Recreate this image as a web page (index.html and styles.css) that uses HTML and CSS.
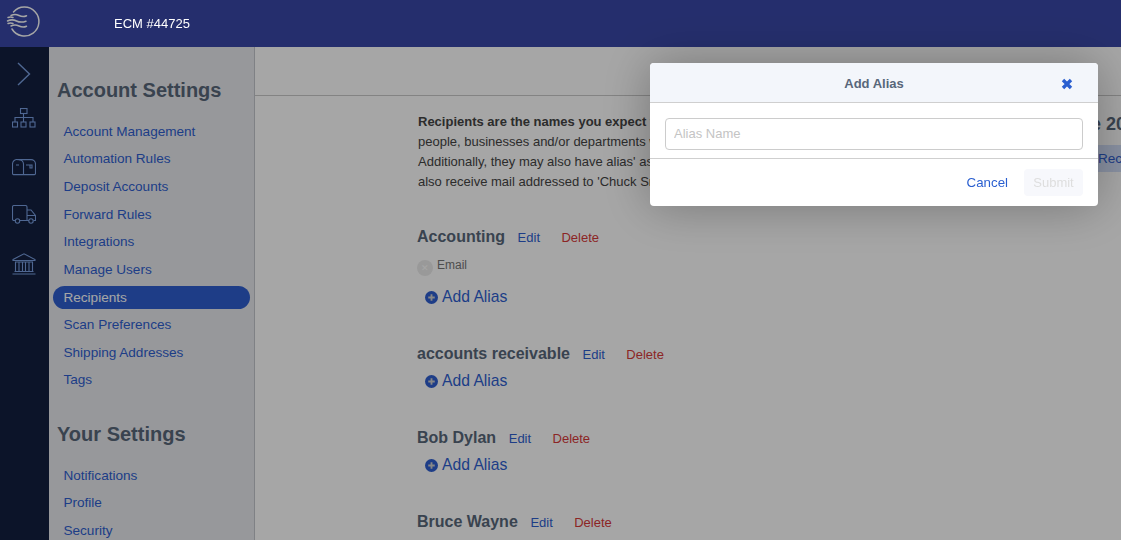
FILE: index.html
```html
<!DOCTYPE html>
<html lang="en">
<head>
<meta charset="utf-8">
<title>Recipients</title>
<link rel="stylesheet" href="styles.css">
</head>
<body>
<div class="app">
  <header class="topbar">
    <svg class="logo" width="49" height="47" viewBox="0 0 49 47" fill="none" stroke="#fff" stroke-width="1.500" stroke-linecap="round">
      <path d="M13.500 12A14.500 14.500 0 1 1 12 29"/>
      <path d="M11 15.500c3-1.500 5-1.500 8 0s5 1.500 7.500 .3"/>
      <path d="M8 17.500c2-.8 3-.8 5 0"/>
      <path d="M7.500 21c3-1.500 6-1.500 9 0s6 1.500 9.500 .2"/>
      <path d="M8 23.500c2-.8 3-.8 5 0"/>
      <path d="M11 26c3-1.500 5-1.500 8 0s5 1.500 7.500 .3"/>
    </svg>
    <span class="account">ECM #44725</span>
  </header>
  <div class="body">
    <nav class="rail">
      <svg class="chevron" width="14" height="24" viewBox="0 0 14 24" fill="none" stroke="#7a9fe0" stroke-width="1.400"><path d="M1 1l11.500 11L1 23"/></svg>
      <svg class="rail-icon org" width="24" height="20" viewBox="0 0 24 20" fill="none" stroke="#7a9fe0" stroke-width="1.100">
        <rect x="8.500" y=".5" width="6.500" height="5"/><path d="M11.500 5.500v4M3 14V9.500h18V14M11.500 9.500V14"/>
        <rect x=".5" y="14" width="5" height="5"/><rect x="9" y="14" width="5" height="5"/><rect x="18" y="14" width="5" height="5"/>
      </svg>
      <svg class="rail-icon" width="24" height="17" viewBox="0 0 24 17" fill="none" stroke="#7a9fe0" stroke-width="1.100">
        <path d="M6 .6h13a4.500 4.500 0 0 1 4.500 4.500v9.500a1 1 0 0 1-1 1H1.500a1 1 0 0 1-1-1V5.100A4.500 4.500 0 0 1 6 .6z"/>
        <path d="M11.500 15.500V5.100A4.500 4.500 0 0 0 7 .6M4 6h3M14 6h6v3h-2V6"/>
      </svg>
      <svg class="rail-icon" width="24" height="19" viewBox="0 0 24 19" fill="none" stroke="#7a9fe0" stroke-width="1.100">
        <path d="M3.500 15.500H2a1.500 1.500 0 0 1-1.500-1.500V2A1.500 1.500 0 0 1 2 .5h11.500A1.500 1.500 0 0 1 15 2v13.500H8"/>
        <path d="M15 5h4l4.500 5.500v5h-2M17 15.500h-2M15 10.500h8"/>
        <circle cx="5.500" cy="16" r="2.200"/><circle cx="19" cy="16" r="2.200"/>
      </svg>
      <svg class="rail-icon" width="24" height="22" viewBox="0 0 24 22" fill="none" stroke="#7a9fe0" stroke-width="1.100">
        <path d="M1 6.500L12 .8l11 5.700v1H1zM3 9h18M3.500 9v9M7 9v9M10.500 9v9M13.500 9v9M17 9v9M20.500 9v9M2.500 18.500h19M.5 21h23"/>
      </svg>
    </nav>
    <aside class="sidebar">
      <h2 class="side-title">Account Settings</h2>
      <ul class="side-list">
        <li><a class="side-link">Account Management</a></li>
        <li><a class="side-link">Automation Rules</a></li>
        <li><a class="side-link">Deposit Accounts</a></li>
        <li><a class="side-link">Forward Rules</a></li>
        <li><a class="side-link">Integrations</a></li>
        <li><a class="side-link">Manage Users</a></li>
        <li><a class="side-link active">Recipients</a></li>
        <li><a class="side-link">Scan Preferences</a></li>
        <li><a class="side-link">Shipping Addresses</a></li>
        <li><a class="side-link">Tags</a></li>
      </ul>
      <h2 class="side-title second">Your Settings</h2>
      <ul class="side-list lower">
        <li><a class="side-link">Notifications</a></li>
        <li><a class="side-link">Profile</a></li>
        <li><a class="side-link">Security</a></li>
      </ul>
    </aside>
    <main class="main">
      <div class="main-head"></div>
      <div class="content">
        <div class="intro">
          <p class="intro-text"><strong>Recipients are the names you expect to receive mail for. These can be</strong><br>people, businesses and/or departments who receive mail at this address.<br>Additionally, they may also have alias' associated, e.g. Charles Smith may<br>also receive mail addressed to 'Chuck Smith' as well as other variations.</p>
          <div class="intro-side">
            <div class="usage">Usage 20</div>
            <a class="add-btn">Add Recipient</a>
          </div>
        </div>
        <section class="recipient first">
          <div class="rec-head"><h3 class="rec-name">Accounting</h3><a class="edit">Edit</a><a class="delete">Delete</a></div>
          <div class="alias"><span class="alias-x">✕</span><span class="alias-label">Email</span></div>
          <a class="add-alias"><svg width="13" height="13" viewBox="0 0 14 14"><circle cx="7" cy="7" r="7" fill="#2f5fd0"/><path d="M7 3.500v7M3.500 7h7" stroke="#d0d0d0" stroke-width="2"/></svg>Add Alias</a>
        </section>
        <section class="recipient">
          <div class="rec-head"><h3 class="rec-name">accounts receivable</h3><a class="edit">Edit</a><a class="delete">Delete</a></div>
          <a class="add-alias"><svg width="13" height="13" viewBox="0 0 14 14"><circle cx="7" cy="7" r="7" fill="#2f5fd0"/><path d="M7 3.500v7M3.500 7h7" stroke="#d0d0d0" stroke-width="2"/></svg>Add Alias</a>
        </section>
        <section class="recipient">
          <div class="rec-head"><h3 class="rec-name">Bob Dylan</h3><a class="edit">Edit</a><a class="delete">Delete</a></div>
          <a class="add-alias"><svg width="13" height="13" viewBox="0 0 14 14"><circle cx="7" cy="7" r="7" fill="#2f5fd0"/><path d="M7 3.500v7M3.500 7h7" stroke="#d0d0d0" stroke-width="2"/></svg>Add Alias</a>
        </section>
        <section class="recipient">
          <div class="rec-head"><h3 class="rec-name">Bruce Wayne</h3><a class="edit">Edit</a><a class="delete">Delete</a></div>
        </section>
      </div>
    </main>
  </div>
</div>
<div class="backdrop"></div>
<div class="modal">
  <div class="modal-head">
    <span class="modal-title">Add Alias</span>
    <svg class="modal-close" width="12" height="12" viewBox="0 0 12 12"><path d="M2 2l8 8M10 2l-8 8" stroke="#2a5fd0" stroke-width="3.400" fill="none"/></svg>
  </div>
  <div class="modal-body">
    <input class="modal-input" type="text" placeholder="Alias Name">
  </div>
  <div class="modal-foot">
    <a class="modal-cancel">Cancel</a>
    <button class="modal-submit" disabled>Submit</button>
  </div>
</div>
</body>
</html>
```
FILE: styles.css
```css
* { box-sizing: border-box; }
html, body { margin: 0; height: 540px; overflow: hidden; }
body { font-family: "Liberation Sans", Arial, sans-serif; color: #333; background: #fff; }
.app { height: 540px; display: flex; flex-direction: column; }
.topbar { height: 47px; flex: none; display: flex; align-items: center; background: #3a48a8; }
.logo { flex: none; }
.account { margin-left: 65px; color: #fff; font-size: 13px; position: relative; z-index: 5; }
.body { flex: 1; display: flex; min-height: 0; }
.rail { width: 49px; flex: none; background: #132040; display: flex; flex-direction: column; align-items: center; padding: 15px 1px 0 0; }
.chevron { margin-bottom: 22px; }
.rail-icon { margin-bottom: 29px; }
.rail-icon.org { margin-bottom: 31px; }
.sidebar { width: 206px; flex: none; background: #e9eaef; border-right: 1px solid #c4c6cc; padding: 31px 4px 0; }
.side-title { margin: 0 0 0 4px; font-size: 20px; line-height: 24px; font-weight: 700; color: #58677a; }
.side-title.second { margin-top: 28.150px; }
.side-list { list-style: none; margin: 15.250px 0 0; padding: 0; display: flex; flex-direction: column; }
.side-list.lower { margin-top: 15.500px; }
.side-list li { height: 27.670px; display: flex; align-items: center; }
.side-link { display: block; width: 197px; height: 23px; line-height: 23px; padding-left: 10.500px; border-radius: 12px; font-size: 13.600px; letter-spacing: -.02px; color: #2f5fd0; }
.side-link.active { background: #2f5fd0; color: #fff; }
.main { flex: 1; min-width: 0; overflow: hidden; }
.main-head { height: 49px; border-bottom: 1px solid #c9c9c9; }
.content { padding: 16px 0 0 163px; }
.intro { display: flex; white-space: nowrap; }
.intro-text { margin: 0; width: 629px; flex: none; font-size: 13px; line-height: 20px; color: #444; }
.intro-side { flex: none; }
.usage { font-size: 18px; font-weight: 700; line-height: 20px; margin-top: 2px; color: #58677a; }
.add-btn { display: block; height: 27px; margin: 11px 0 0 15px; padding: 0 8px; border-radius: 4px; background: #d4e0fa; color: #2f5fd0; font-size: 13.600px; line-height: 27px; }
.recipient { margin: 37px 0 0 -1px; }
.recipient.first { margin-top: 35px; }
.rec-head { display: flex; align-items: center; height: 20px; }
.rec-name { margin: 0 12.600px 0 0; font-size: 16px; line-height: 20px; font-weight: 700; color: #58677a; }
.edit { font-size: 13px; color: #2f5fd0; margin-right: 21.400px; }
.delete { font-size: 13px; color: #d83a3a; }
.alias { display: flex; align-items: flex-start; height: 21px; margin-top: 12px; }
.alias-x { width: 16px; height: 16px; margin-top: 1px; margin-right: 4px; border-radius: 50%; background: #ececec; color: #fff; font-size: 9px; line-height: 16px; text-align: center; }
.alias-label { font-size: 12px; line-height: 13px; color: #777; }
.add-alias { display: flex; align-items: center; gap: 4px; height: 20px; margin-top: 7px; padding-left: 8px; font-size: 15.700px; color: #2f5fd0; }
.backdrop { position: fixed; inset: 0; background: rgba(0,0,0,.35); }
.modal { position: fixed; left: 650px; top: 63px; width: 448px; height: 143px; background: #fff; border-radius: 4px; box-shadow: 0 0 50px rgba(0,0,0,.3); display: flex; flex-direction: column; }
.modal-head { height: 40px; flex: none; display: flex; align-items: center; justify-content: center; padding-top: 2px; background: #f3f6fb; border-bottom: 1px solid #cfcfcf; border-radius: 4px 4px 0 0; position: relative; }
.modal-title { font-size: 13px; font-weight: 700; color: #58677a; }
.modal-close { position: absolute; left: 411px; top: 15px; }
.modal-body { height: 56px; flex: none; padding: 15px 15px 0; border-bottom: 1px solid #cfcfcf; }
.modal-input { display: block; width: 100%; height: 32px; padding: 0 8px 2px; border: 1px solid #ccc; border-radius: 4px; font: 13px "Liberation Sans", Arial, sans-serif; outline: none; }
.modal-input::placeholder { color: #c4c4c4; opacity: 1; }
.modal-foot { flex: 1; display: flex; align-items: flex-start; justify-content: flex-end; padding: 10px 15px 0 0; gap: 16px; }
.modal-cancel { font-size: 13.300px; line-height: 27px; color: #2a5fd0; }
.modal-submit { width: 59px; height: 27px; border: 0; border-radius: 4px; background: #f7f8fc; color: #dedede; font: 13px "Liberation Sans", Arial, sans-serif; padding: 0; }
```
